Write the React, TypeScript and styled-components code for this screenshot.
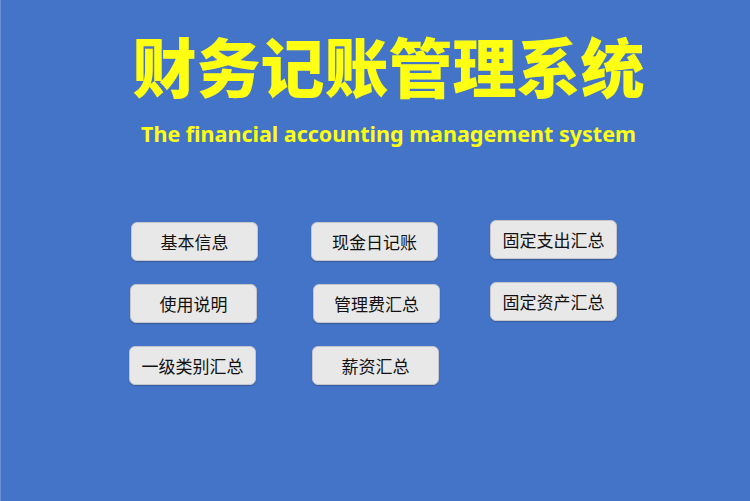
import React from 'react';
import styled, { createGlobalStyle } from 'styled-components';

const GlobalStyle = createGlobalStyle`
    html, body {
        margin: 0;
        padding: 0;
        background: #4374c7;
    }
    body {
        font-family: "Noto Sans CJK SC", "Noto Sans", sans-serif;
    }
`;

const columns: { lift: number; items: { label: string; nudge: number }[] }[] = [
    {
        lift: 0,
        items: [
            { label: '基本信息', nudge: 0 },
            { label: '使用说明', nudge: -1 },
            { label: '一级类别汇总', nudge: -2 },
        ],
    },
    {
        lift: 0,
        items: [
            { label: '现金日记账', nudge: 0 },
            { label: '管理费汇总', nudge: 2 },
            { label: '薪资汇总', nudge: 1 },
        ],
    },
    {
        lift: -2,
        items: [
            { label: '固定支出汇总', nudge: -1 },
            { label: '固定资产汇总', nudge: -1 },
        ],
    },
];

function App() {
    return (
        <>
            <GlobalStyle />
            <Screen>
                <Header>
                    <Title>财务记账管理系统</Title>
                    <Subtitle>The financial accounting management system</Subtitle>
                </Header>
                <Menu>
                    {columns.map((col, i) => (
                        <Column key={i} $lift={col.lift}>
                            {col.items.map((item) => (
                                <MenuButton key={item.label} $nudge={item.nudge}>
                                    {item.label}
                                </MenuButton>
                            ))}
                        </Column>
                    ))}
                </Menu>
            </Screen>
        </>
    );
}

export default App;

const Screen = styled.main`
    width: 750px;
    height: 501px;
    background: #4374c7;
    box-sizing: border-box;
    border-left: 1px solid #6b90d2;
    overflow: hidden;
`;

const Header = styled.header`
    display: flex;
    flex-direction: column;
    align-items: center;
    padding: 20px 0 0 26px;
`;

const Title = styled.h1`
    margin: 0;
    color: #ffff14;
    font-family: "Noto Sans CJK SC", sans-serif;
    font-weight: 900;
    font-size: 64px;
    line-height: 88px;
`;

const Subtitle = styled.p`
    margin: 12px 0 0;
    color: #ffff14;
    font-family: "Noto Sans", "Open Sans", sans-serif;
    font-weight: 700;
    font-size: 21.5px;
    line-height: 28px;
`;

const Menu = styled.nav`
    display: flex;
    align-items: flex-start;
    gap: 53px;
    margin-top: 74px;
    padding-left: 130px;
`;

const Column = styled.div<{ $lift: number }>`
    display: flex;
    flex-direction: column;
    width: 127px;
    gap: 23px;
    margin-top: ${(p) => p.$lift}px;
`;

const MenuButton = styled.button<{ $nudge: number }>`
    width: 127px;
    height: 39px;
    flex: none;
    box-sizing: border-box;
    margin-left: ${(p) => p.$nudge}px;
    background: #e9e8e8;
    border: 1px solid #c4c6cc;
    border-radius: 6px;
    box-shadow: 0 1px 1px rgba(40, 50, 80, 0.35);
    color: #111;
    font-family: "Noto Sans CJK SC", sans-serif;
    font-size: 17px;
    padding: 0;
    cursor: pointer;
`;
